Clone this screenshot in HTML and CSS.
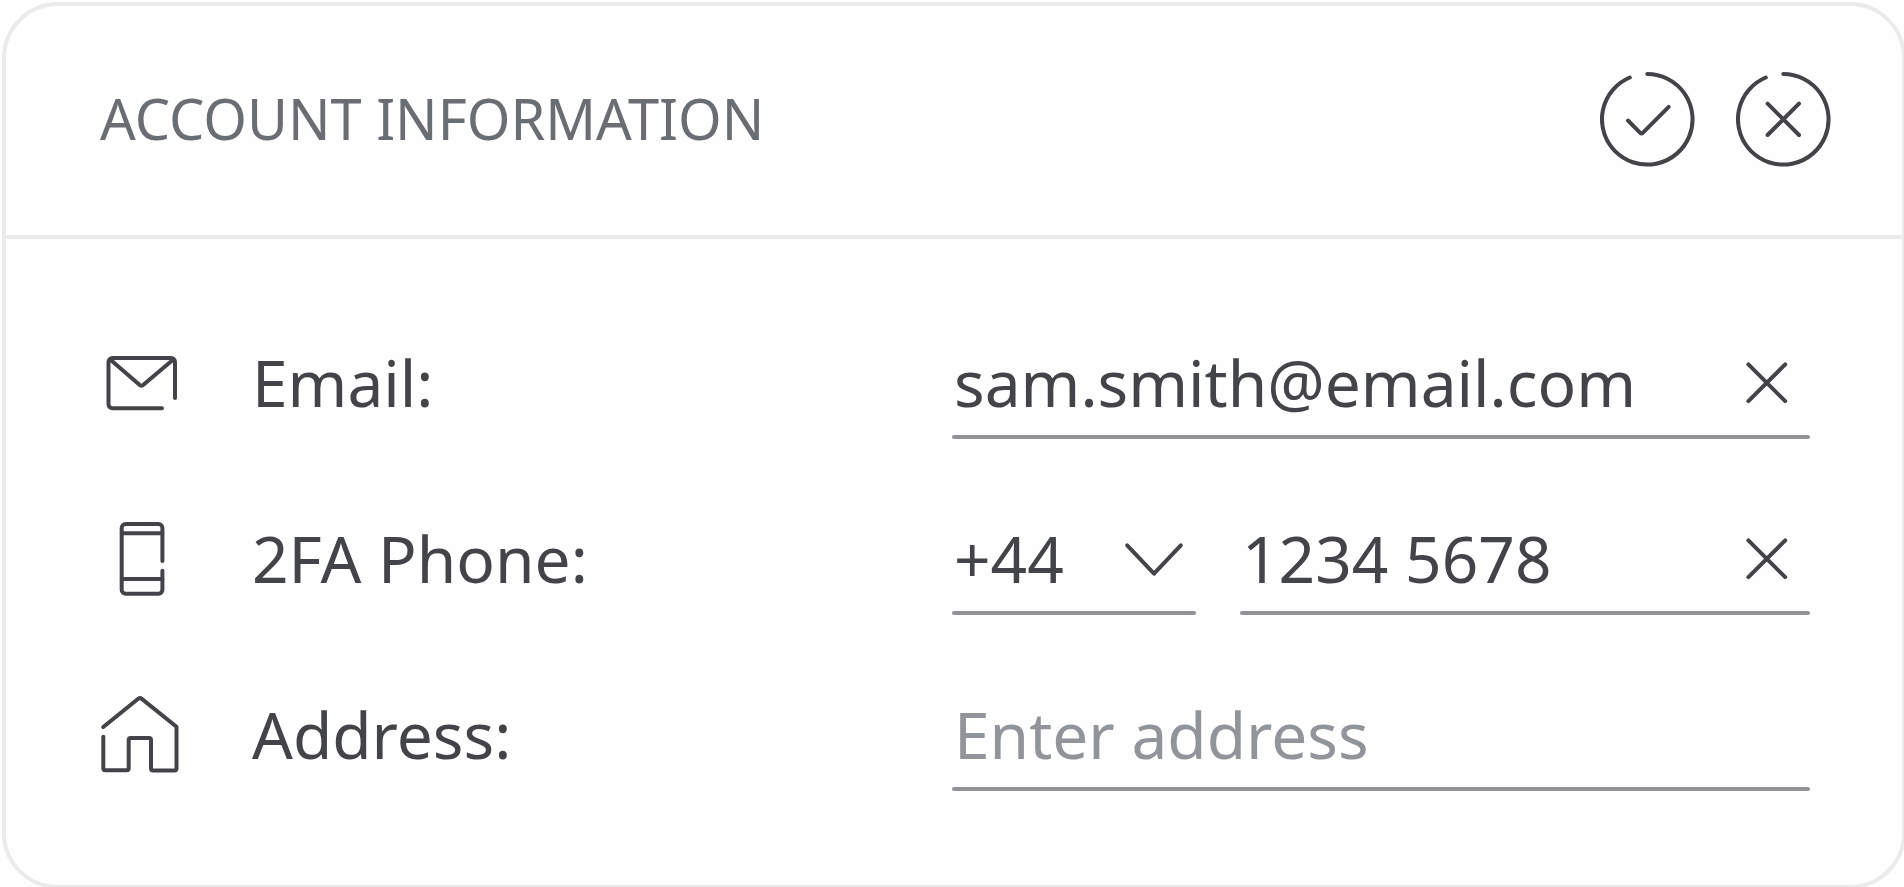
FILE: index.html
```html
<!DOCTYPE html>
<html lang="en">
<head>
<meta charset="utf-8">
<title>Account information</title>
<link rel="stylesheet" href="styles.css">
</head>
<body>
<form class="card">
  <header class="card-header">
    <h1 class="title">ACCOUNT INFORMATION</h1>
    <div class="actions">
      <button class="icon-button" type="submit" aria-label="Save">
        <svg class="icon action-icon" viewBox="0 0 96 96" aria-hidden="true">
          <path d="M47.3 3A45.3 45.3 0 1 1 29.8 6.5"/>
          <path d="M28 49.5L40.2 61.8Q41.5 63 42.8 61.8L68.7 35.8"/>
        </svg>
      </button>
      <button class="icon-button" type="reset" aria-label="Cancel">
        <svg class="icon action-icon" viewBox="0 0 96 96" aria-hidden="true">
          <path d="M47.3 3A45.3 45.3 0 1 1 29.8 6.5"/>
          <path d="M31.6 32.6L63 64M63 32.6L31.6 64"/>
        </svg>
      </button>
    </div>
  </header>

  <div class="card-body">
    <div class="row">
      <div class="caption">
        <svg class="icon row-icon" viewBox="0 1 80 80" aria-hidden="true">
          <path d="M62 66.3H12.5A4 4 0 0 1 8.5 62.3V19.9A4 4 0 0 1 12.5 15.9H71A4 4 0 0 1 75 19.9V56"/>
          <path d="M10.5 17.7L40 43.2Q41.4 44.4 42.8 43.2L73 17.7"/>
        </svg>
        <label for="email">Email:</label>
      </div>
      <div class="field">
        <input class="control" id="email" type="text" inputmode="email" value="sam.smith@email.com">
        <button class="icon-button clear" type="button" aria-label="Clear email">
          <svg class="icon clear-icon" viewBox="0 0 48 48" aria-hidden="true"><path d="M5.4 5.4L42.2 42.2M42.2 5.4L5.4 42.2"/></svg>
        </button>
      </div>
    </div>

    <div class="row">
      <div class="caption">
        <svg class="icon row-icon" viewBox="0 1 80 80" aria-hidden="true">
          <path d="M62.4 43V9.9A4 4 0 0 0 58.4 5.9H25.7A4 4 0 0 0 21.7 9.9V71.7A4 4 0 0 0 25.7 75.7H58.4A4 4 0 0 0 62.4 71.7V52.7"/>
          <path d="M21.7 15.2H62.4M21.7 61H62.4"/>
        </svg>
        <label for="phone">2FA Phone:</label>
      </div>
      <div class="phone-fields">
        <div class="field">
          <select class="control" aria-label="Country code">
            <option>+44</option>
            <option>+1</option>
            <option>+33</option>
          </select>
          <svg class="icon chevron" viewBox="0 0 60 88" aria-hidden="true"><path d="M3.2 30.3L30 58.7L56.8 30.3"/></svg>
        </div>
        <div class="field">
          <input class="control" id="phone" type="tel" value="1234 5678">
          <button class="icon-button clear" type="button" aria-label="Clear phone">
            <svg class="icon clear-icon" viewBox="0 0 48 48" aria-hidden="true"><path d="M5.4 5.4L42.2 42.2M42.2 5.4L5.4 42.2"/></svg>
          </button>
        </div>
      </div>
    </div>

    <div class="row">
      <div class="caption">
        <svg class="icon row-icon" viewBox="0 1 80 80" aria-hidden="true">
          <path d="M3.3 33L38.2 4.8Q40 3.4 41.8 4.8L76.5 32.7V74.3Q76.5 76.5 74.5 76.5H53Q51 76.5 51 74.3V46Q51 44 49 44H30.7Q28.7 44 28.7 46V74.3Q28.7 76.3 26.7 76.3H5.3Q3.3 76.3 3.3 74.3V42.7"/>
        </svg>
        <label for="address">Address:</label>
      </div>
      <div class="field">
        <input class="control" id="address" type="text" placeholder="Enter address">
      </div>
    </div>
  </div>
</form>
</body>
</html>
```
FILE: styles.css
```css
* {
  box-sizing: border-box;
}

body {
  margin: 0;
  overflow: hidden;
  background: #fefefe;
  color: #434447;
  font-family: "Noto Sans", sans-serif;
  font-size: 64px;
  line-height: 88px;
}

.card {
  margin: 2px -2px 0 2px;
  border: 4px solid #ebebeb;
  border-radius: 56px;
}

.card-header {
  display: flex;
  align-items: center;
  justify-content: space-between;
  padding: 65px 70px 68px 94px;
  border-bottom: 4px solid #ebebeb;
}

.title {
  margin: 0;
  padding-bottom: 2px;
  color: #6a6d71;
  font-size: 56px;
  font-weight: 400;
}

.actions {
  display: flex;
  gap: 40px;
}

.icon-button {
  display: flex;
  padding: 0;
  border: 0;
  background: none;
  color: inherit;
  cursor: pointer;
}

.icon {
  display: block;
  flex: none;
  fill: none;
  stroke: currentColor;
  stroke-width: 4;
  stroke-linecap: round;
  stroke-linejoin: round;
}

.action-icon {
  width: 96px;
  height: 96px;
}

.row-icon {
  width: 80px;
  height: 80px;
}

.clear-icon {
  width: 48px;
  height: 48px;
}

.card-body {
  display: flex;
  flex-direction: column;
  gap: 76px;
  padding: 100px 92px 94px 94px;
}

.row {
  display: grid;
  grid-template-columns: 852fr 858fr;
  align-items: start;
}

.caption {
  display: flex;
  align-items: center;
  gap: 72px;
}

.phone-fields {
  display: grid;
  grid-template-columns: 244px 1fr;
  gap: 44px;
}

.field {
  position: relative;
  display: grid;
  grid-template-columns: 1fr auto;
  align-items: center;
  row-gap: 8px;
}

.field::after {
  content: "";
  grid-column: 1 / -1;
  height: 4px;
  border-radius: 2px;
  background: #919399;
}

.control {
  width: 100%;
  min-width: 0;
  height: 88px;
  padding: 0 2px;
  border: 0;
  outline: 0;
  appearance: none;
  background: none;
  color: inherit;
  font: inherit;
}

.control::placeholder {
  color: #919499;
  opacity: 1;
}

.clear {
  margin-right: 19px;
}

.chevron {
  position: absolute;
  top: 0;
  right: 12px;
  width: 60px;
  height: 88px;
  pointer-events: none;
}
```
